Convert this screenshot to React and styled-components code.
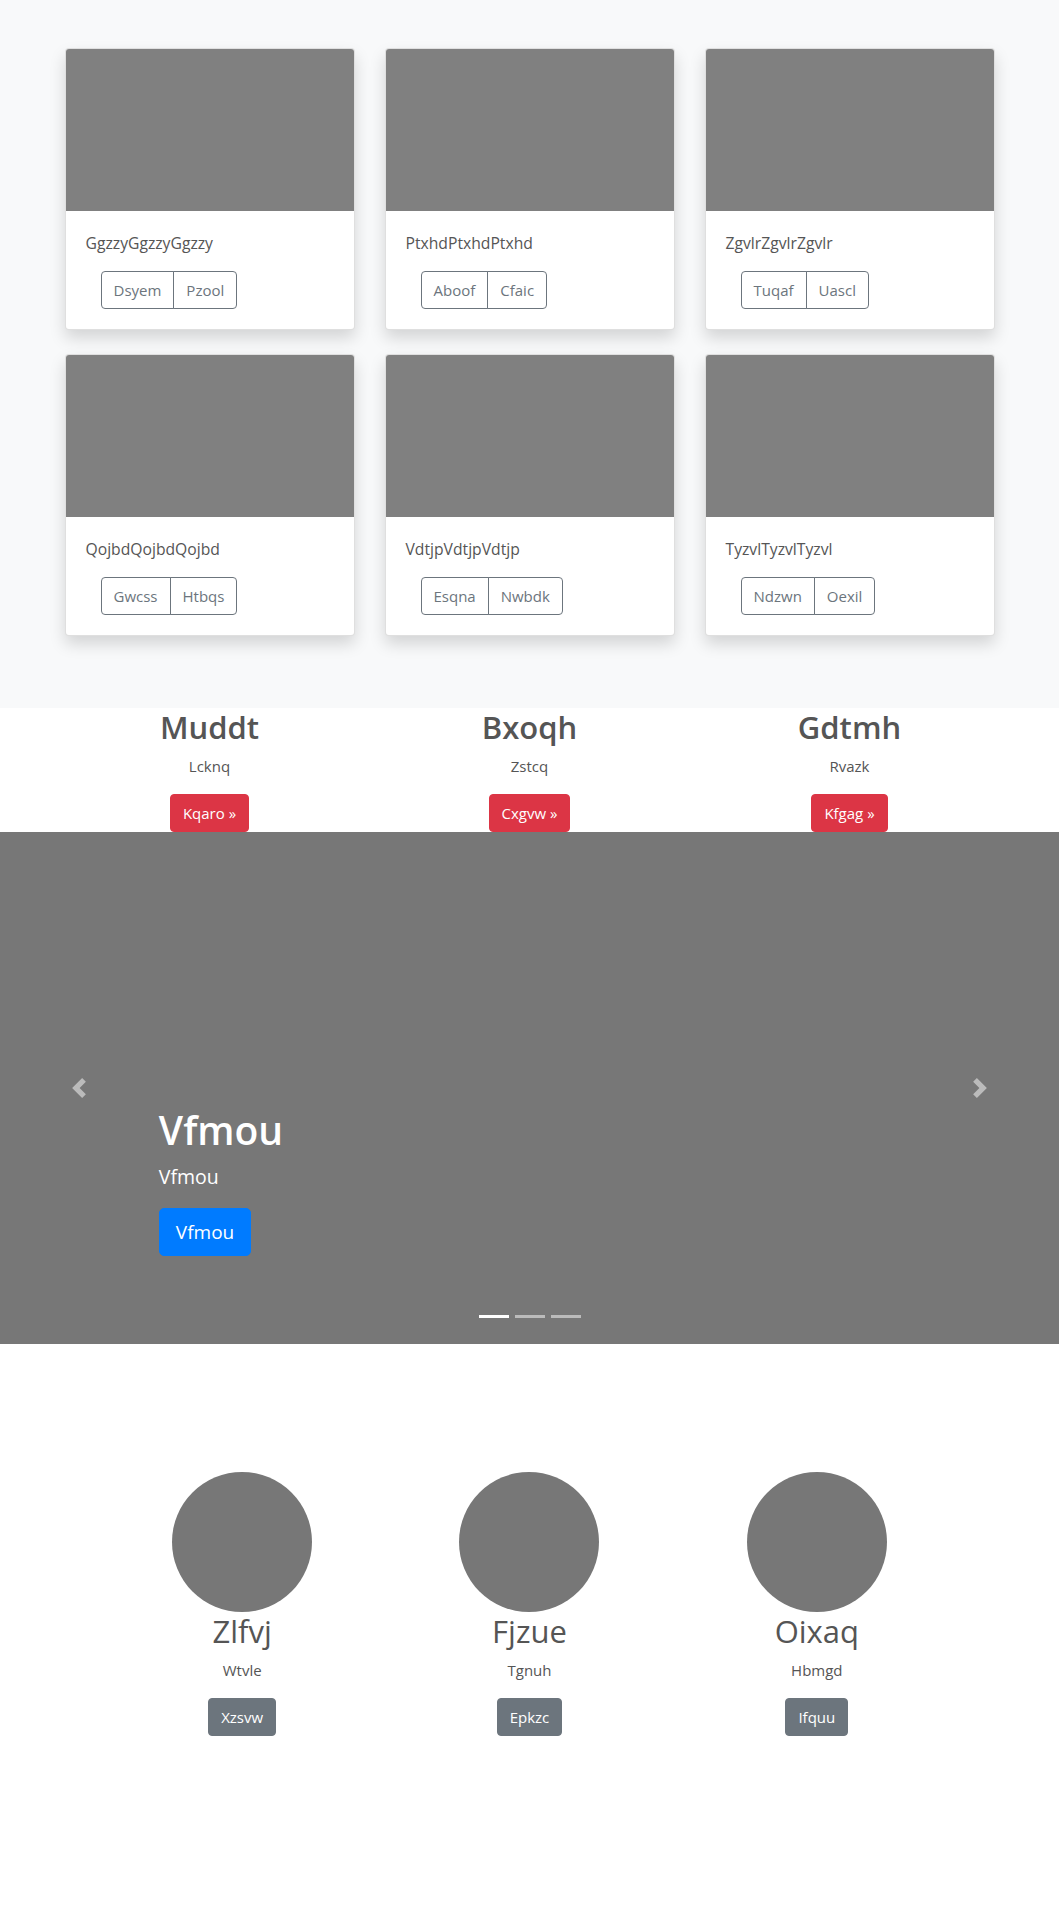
import React from 'react';
import styled, { createGlobalStyle } from 'styled-components';

const GlobalStyle = createGlobalStyle`
  * {
    box-sizing: border-box;
  }
  body {
    margin: 0;
    font-family: "Open Sans", "Noto Sans", Arial, sans-serif;
    font-size: 16px;
    line-height: 1.5;
    color: #555;
    background: #fff;
  }
`;

const AlbumSection = styled.section`
  background: #f8f9fa;
  padding: 48px 0;
`;

const Container = styled.div`
  width: 960px;
  margin: 0 auto;
  padding: 0 ${p => (p.$flush ? 0 : 15)}px;
`;

const CardGrid = styled.div`
  display: grid;
  grid-template-columns: repeat(3, 1fr);
  column-gap: 30px;
`;

const Card = styled.div`
  display: flex;
  flex-direction: column;
  background: #fff;
  border: 1px solid rgba(0, 0, 0, 0.125);
  border-radius: 4px;
  box-shadow: 0 8px 16px rgba(0, 0, 0, 0.15);
  margin-bottom: 24px;
  overflow: hidden;
`;

const Thumb = styled.div`
  height: 162px;
  background: #808080;
`;

const CardBody = styled.div`
  padding: 20px;
`;

const CardText = styled.p`
  margin: 0 0 16px;
  font-size: 15.7px;
  line-height: 24px;
`;

const BtnGroup = styled.div`
  display: inline-flex;
  margin-left: 15px;
`;

const OutlineBtn = styled.button`
  font-family: inherit;
  font-size: 15px;
  line-height: 24px;
  padding: 6px 12px;
  color: #6c757d;
  background: transparent;
  border: 1px solid #6c757d;
  border-radius: 0;
  &:first-child {
    border-radius: 4px 0 0 4px;
  }
  &:last-child {
    border-radius: 0 4px 4px 0;
    margin-left: -1px;
  }
`;

const FeatureGrid = styled.div`
  display: grid;
  grid-template-columns: repeat(3, 1fr);
  text-align: center;
`;

const Feature = styled.div`
  display: flex;
  flex-direction: column;
  align-items: center;
`;

const FeatureTitle = styled.h2`
  margin: 0 0 8px;
  font-size: 31px;
  line-height: 38px;
  font-weight: 600;
  color: #555;
`;

const Para = styled.p`
  margin: 0 0 16px;
  font-size: 15px;
  line-height: 24px;
`;

const SolidBtn = styled.button`
  font-family: inherit;
  font-size: ${p => (p.$lg ? 19 : 15)}px;
  line-height: ${p => (p.$lg ? 30 : 24)}px;
  padding: ${p => (p.$lg ? '8px 16px' : '6px 12px')};
  color: #fff;
  background: ${p => p.$bg};
  border: 1px solid ${p => p.$bg};
  border-radius: ${p => (p.$lg ? 5 : 4)}px;
`;

const Carousel = styled.div`
  position: relative;
  height: 512px;
  background: #777;
`;

const Caption = styled.div`
  position: absolute;
  left: 15%;
  right: 15%;
  bottom: 48px;
  padding-bottom: 40px;
  color: #fff;
`;

const CaptionTitle = styled.h1`
  margin: 0 0 8px;
  font-size: 39px;
  line-height: 48px;
  font-weight: 600;
`;

const CaptionText = styled.p`
  margin: 0 0 16px;
  font-size: 19.5px;
  line-height: 30px;
`;

const Control = styled.button`
  position: absolute;
  top: 0;
  bottom: 0;
  ${p => (p.$side === 'prev' ? 'left: 0;' : 'right: 0;')}
  width: 15%;
  display: flex;
  align-items: center;
  justify-content: center;
  background: none;
  border: 0;
  padding: 0;
  opacity: 0.5;
`;

const Indicators = styled.ol`
  position: absolute;
  left: 0;
  right: 0;
  bottom: 0;
  margin: 0 0 16px;
  padding: 0;
  list-style: none;
  display: flex;
  justify-content: center;
`;

const Indicator = styled.li`
  width: 30px;
  height: 23px;
  margin: 0 3px;
  border-top: 10px solid transparent;
  border-bottom: 10px solid transparent;
  background: #fff;
  background-clip: padding-box;
  opacity: ${p => (p.$active ? 1 : 0.5)};
`;

const TeamSection = styled.section`
  padding: 128px 0 120px;
`;

const TeamGrid = styled.div`
  width: 862px;
  margin: 0 auto;
  display: grid;
  grid-template-columns: repeat(3, 1fr);
  text-align: center;
`;

const Avatar = styled.div`
  width: 140px;
  height: 140px;
  border-radius: 50%;
  background: #777;
`;

const MemberName = styled.h2`
  margin: 0 0 8px;
  font-size: 31px;
  line-height: 38px;
  font-weight: 400;
  color: #555;
`;

const albums = [
  ['GgzzyGgzzyGgzzy', 'Dsyem', 'Pzool'],
  ['PtxhdPtxhdPtxhd', 'Aboof', 'Cfaic'],
  ['ZgvlrZgvlrZgvlr', 'Tuqaf', 'Uascl'],
  ['QojbdQojbdQojbd', 'Gwcss', 'Htbqs'],
  ['VdtjpVdtjpVdtjp', 'Esqna', 'Nwbdk'],
  ['TyzvlTyzvlTyzvl', 'Ndzwn', 'Oexil'],
];

const features = [
  ['Muddt', 'Lcknq', 'Kqaro'],
  ['Bxoqh', 'Zstcq', 'Cxgvw'],
  ['Gdtmh', 'Rvazk', 'Kfgag'],
];

const team = [
  ['Zlfvj', 'Wtvle', 'Xzsvw'],
  ['Fjzue', 'Tgnuh', 'Epkzc'],
  ['Oixaq', 'Hbmgd', 'Ifquu'],
];

function Chevron({ dir }) {
  const d = dir === 'prev'
    ? 'M5.25 0l-4 4 4 4 1.5-1.5L4.25 4l2.5-2.5L5.25 0z'
    : 'M2.75 0l-1.5 1.5L3.75 4l-2.5 2.5L2.75 8l4-4-4-4z';
  return (
    <svg width='20' height='20' viewBox='0 0 8 8' fill='#fff'>
      <path d={d} />
    </svg>
  );
}

function App() {
  return (
    <>
      <GlobalStyle />
      <AlbumSection>
        <Container>
          <CardGrid>
            {albums.map(([text, a, b]) => (
              <Card key={text}>
                <Thumb />
                <CardBody>
                  <CardText>{text}</CardText>
                  <BtnGroup>
                    <OutlineBtn>{a}</OutlineBtn>
                    <OutlineBtn>{b}</OutlineBtn>
                  </BtnGroup>
                </CardBody>
              </Card>
            ))}
          </CardGrid>
        </Container>
      </AlbumSection>

      <Container $flush>
        <FeatureGrid>
          {features.map(([title, text, btn]) => (
            <Feature key={title}>
              <FeatureTitle>{title}</FeatureTitle>
              <Para>{text}</Para>
              <SolidBtn $bg='#dc3545'>{btn} »</SolidBtn>
            </Feature>
          ))}
        </FeatureGrid>
      </Container>

      <Carousel>
        <Control $side='prev' aria-label='Previous'>
          <Chevron dir='prev' />
        </Control>
        <Control $side='next' aria-label='Next'>
          <Chevron dir='next' />
        </Control>
        <Caption>
          <CaptionTitle>Vfmou</CaptionTitle>
          <CaptionText>Vfmou</CaptionText>
          <SolidBtn $lg $bg='#007bff'>Vfmou</SolidBtn>
        </Caption>
        <Indicators>
          <Indicator $active />
          <Indicator />
          <Indicator />
        </Indicators>
      </Carousel>

      <TeamSection>
        <TeamGrid>
          {team.map(([name, role, btn]) => (
            <Feature key={name}>
              <Avatar />
              <MemberName>{name}</MemberName>
              <Para>{role}</Para>
              <SolidBtn $bg='#6c757d'>{btn}</SolidBtn>
            </Feature>
          ))}
        </TeamGrid>
      </TeamSection>
    </>
  );
}

export default App;
